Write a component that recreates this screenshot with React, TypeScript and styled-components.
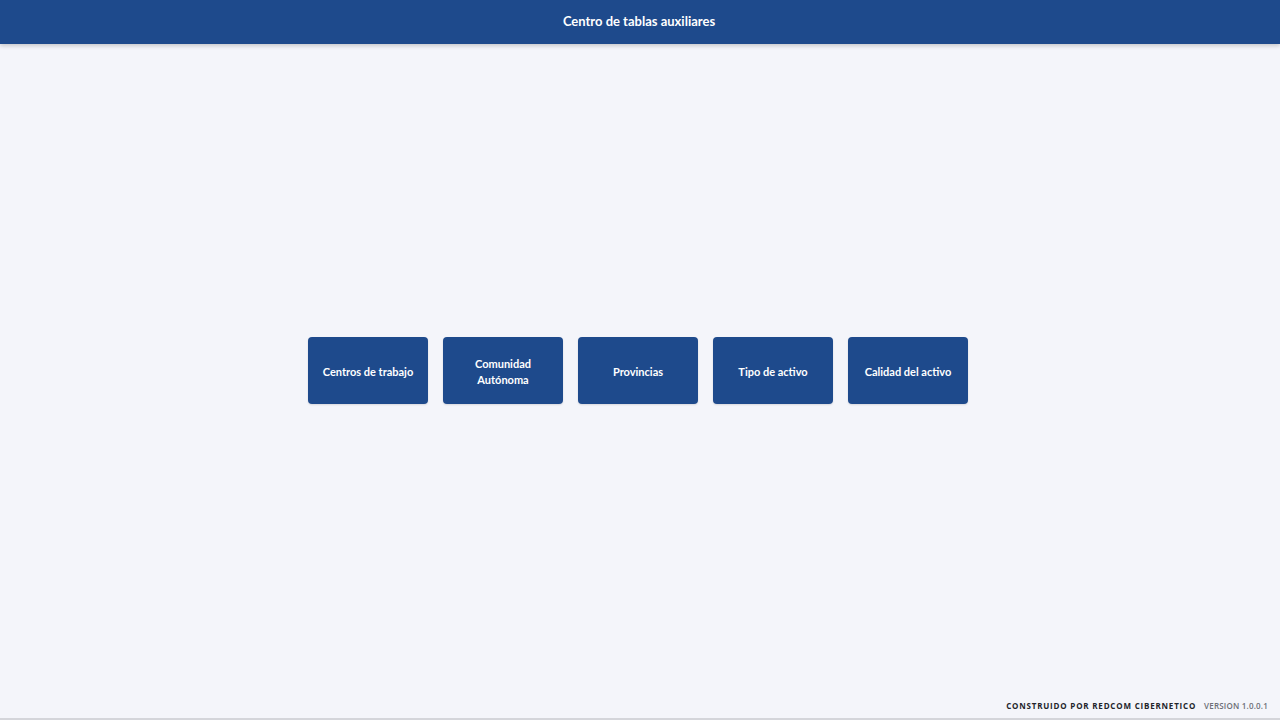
import React from "react";
import styled, { createGlobalStyle } from "styled-components";

const Global = createGlobalStyle`
  html, body { margin: 0; padding: 0; height: 100%; }
  body { background: #f4f5fa; font-family: Lato, "Noto Sans", sans-serif; }
  #root { height: 100%; }
`;

const Page = styled.div`
  height: 720px;
  display: flex;
  flex-direction: column;
  box-sizing: border-box;
  border-bottom: 2px solid #d4d5da;
`;

const Header = styled.header`
  height: 44px;
  flex: none;
  background: #1e4a8c;
  color: #ffffff;
  display: flex;
  align-items: center;
  justify-content: center;
  box-shadow: 0 2px 4px rgba(0, 0, 0, 0.18);
  position: relative;
  z-index: 1;
`;

const Title = styled.h1`
  margin: 0 2px 2px 0;
  font-size: 13px;
  font-weight: 700;
`;

const Main = styled.main`
  flex: 1;
  display: flex;
  align-items: center;
  justify-content: center;
  padding-top: 3px;
`;

const Grid = styled.div`
  display: flex;
  gap: 15px;
  margin-right: 4px;
`;

const Tile = styled.button<{ $wrap?: boolean }>`
  width: 120px;
  height: 67px;
  border: none;
  border-radius: 4px;
  background: #1e4a8c;
  color: #ffffff;
  font-family: Lato, "Noto Sans", sans-serif;
  font-size: 11px;
  font-weight: 700;
  line-height: 16px;
  padding: ${(p) => (p.$wrap ? "2px 24px 0" : "2px 6px 0")};
  cursor: pointer;
  box-shadow: 0 1px 2px rgba(0, 0, 0, 0.12);
`;

const Footer = styled.footer`
  height: 24px;
  flex: none;
  display: flex;
  align-items: flex-start;
  justify-content: flex-end;
  gap: 8px;
  padding: 6px 12px 0 0;
  box-sizing: border-box;
  font-family: "Open Sans", "Noto Sans", sans-serif;
  font-size: 8px;
  text-transform: uppercase;
`;

const Credit = styled.span<{ $muted?: boolean }>`
  font-weight: ${(p) => (p.$muted ? 600 : 700)};
  color: ${(p) => (p.$muted ? "#6b6e76" : "#22242a")};
  letter-spacing: ${(p) => (p.$muted ? "0.2px" : "0.8px")};
`;

const items: { label: string; wrap?: boolean }[] = [
  { label: "Centros de trabajo" },
  { label: "Comunidad Autónoma", wrap: true },
  { label: "Provincias" },
  { label: "Tipo de activo" },
  { label: "Calidad del activo" },
];

export default function App() {
  return (
    <>
      <Global />
      <Page>
        <Header>
          <Title>Centro de tablas auxiliares</Title>
        </Header>
        <Main>
          <Grid>
            {items.map((t) => (
              <Tile key={t.label} $wrap={t.wrap}>
                {t.label}
              </Tile>
            ))}
          </Grid>
        </Main>
        <Footer>
          <Credit>Construido por Redcom Cibernetico</Credit>
          <Credit $muted>Version 1.0.0.1</Credit>
        </Footer>
      </Page>
    </>
  );
}
